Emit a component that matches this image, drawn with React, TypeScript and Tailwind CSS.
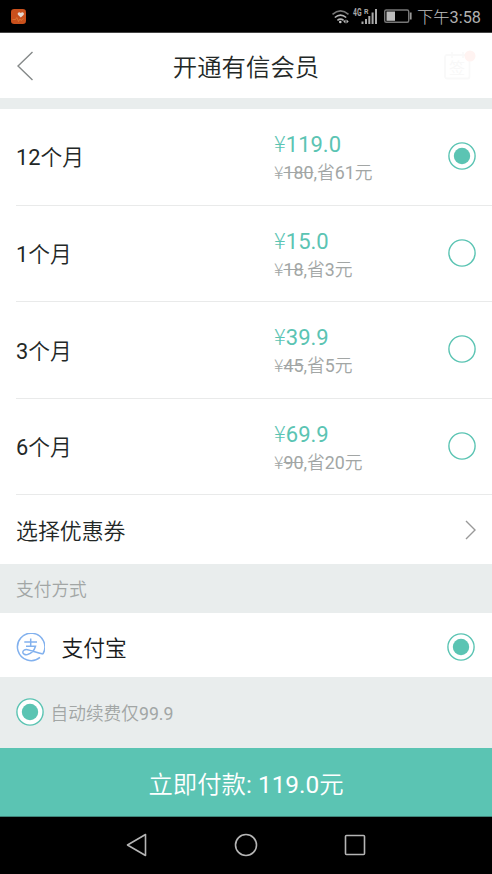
import React, { useState } from 'react'

const plans = [
    { months: 12, price: '119.0', original: '180', save: '61' },
    { months: 1, price: '15.0', original: '18', save: '3' },
    { months: 3, price: '39.9', original: '45', save: '5' },
    { months: 6, price: '69.9', original: '90', save: '20' },
]

const Radio: React.FC<{ checked?: boolean }> = ({ checked }) => (
    <svg className="block shrink-0" width="28" height="28" viewBox="0 0 28 28">
        <circle cx="14" cy="14" r="13.1" fill="#fff" stroke="#5bc4b3" strokeWidth="1.4" />
        {checked && <circle cx="14" cy="14" r="8.2" fill="#5bc4b3" />}
    </svg>
)

const StatusBar: React.FC = () => (
    <div className="flex h-[33px] shrink-0 items-center border-b border-[#444] bg-black pl-[11px] pr-[11px]">
        <svg width="15" height="15" viewBox="0 0 15 15">
            <rect width="15" height="15" rx="3.2" fill="#c9501c" />
            <path d="M9.8 8.6 7.1 6C5.6 4.3 8.1 2 9.8 4c1.7-2 4.2.3 2.7 2z" fill="#e3d8d1" />
            <path d="M1.5 10.5h3l1.3-2 1.7 4 1.5-2.5 1 1.5 2.5-2" fill="none" stroke="#e0893f" strokeWidth=".6" />
        </svg>
        <svg className="ml-auto" width="80" height="22" viewBox="332 5 80 22">
            <g fill="none" strokeWidth="1.6">
                <path d="M332.5 14.3q8-7 16 0" stroke="#777" />
                <path d="M334.8 17.5q5.7-4.8 11.4 0" stroke="#b5b5b5" />
                <path d="M337.4 20.3q3.1-2.5 6.2 0" stroke="#b5b5b5" />
            </g>
            <circle cx="340.3" cy="22" r="1.3" fill="#ccc" />
            <path d="m345.5 19.6-2.2 2 2.2 2zM346.5 19.6l2.2 2-2.2 2z" fill="#bbb" />
            <text x="353" y="16.2" fontSize="10" fontWeight="700" textLength="8.5" lengthAdjust="spacingAndGlyphs" fill="#aaa">4G</text>
            <text x="364" y="13.5" fontSize="7" fontWeight="700" fill="#aaa">R</text>
            <path d="M361.5 21.5h2V24h-2zM365 19h2v5h-2zM368.3 16h2v8h-2zM371.6 12.5h2V24h-2zM375 9h2v15h-2z" fill="#aaa" />
            <rect x="384.7" y="10" width="24" height="12.3" rx="1.5" fill="none" stroke="#777" strokeWidth="1.4" />
            <path d="M386.5 11.5h8.5v9.3h-8.5z" fill="#bdbdbd" />
            <path d="M410.7 12.5v7" stroke="#999" strokeWidth="1.8" />
        </svg>
        <span className="ml-[5px] pt-[4px] text-[16.3px] font-light leading-none text-[#c0c0c0]">
            下午<span className="font-normal text-[#b0b0b0]">3:58</span>
        </span>
    </div>
)

const App: React.FC = () => {
    const [selected, setSelected] = useState(0)

    return (
        <div className="flex h-[874px] w-[492px] flex-col overflow-hidden bg-white font-['Roboto','Noto_Sans_CJK_SC',sans-serif] text-[#232827]">
            <StatusBar />

            <header className="flex h-[65px] shrink-0 items-center justify-between pl-[17px] pr-4">
                <svg width="32" height="30" viewBox="0 0 32 30" fill="none" stroke="#858989" strokeWidth="1.4">
                    <path d="M15.5 1 1 15l14.5 14" />
                </svg>
                <h1 className="-ml-px pt-[5px] text-[24.4px] font-[350] leading-none">开通有信会员</h1>
                <svg width="32" height="32" viewBox="0 0 32 32" fill="none">
                    <rect x="1" y="5" width="24.5" height="23.5" rx="2" stroke="#f9f9f9" strokeWidth="1.8" />
                    <path d="M8 2v6M19 2v6" stroke="#f9f9f9" strokeWidth="1.5" />
                    <text x="5" y="24" fontSize="16" fill="#f8f8f8">签</text>
                    <circle cx="26" cy="6" r="5.5" fill="#fff3f1" />
                </svg>
            </header>

            <div className="h-[11px] shrink-0 bg-[#e9eded]" />

            <ul className="shrink-0 pl-4">
                {plans.map((plan, i) => (
                    <li
                        key={plan.months}
                        className="flex h-[96.6px] items-center border-b border-[#e9eaea] pb-px pr-4"
                        onClick={() => setSelected(i)}
                    >
                        <span className="w-[258px] pt-[4px] text-[21.8px] leading-none">
                            {plan.months}<span className="font-[350]">个月</span>
                        </span>
                        <div className="flex-1 pt-[6px]">
                            <p className="text-[22px] leading-[28px] text-[#5bc4b3]">
                                <span className="font-['Noto_Sans_CJK_SC',sans-serif] font-light leading-none">¥</span>
                                {plan.price}
                            </p>
                            <p className="text-[17.8px] leading-[28px] text-[#a2a6a5]">
                                <span className="font-['Noto_Sans_CJK_SC',sans-serif] font-light leading-none">¥</span>
                                <span className="line-through">{plan.original}</span>,
                                <span className="font-[350]">省</span>{plan.save}<span className="font-[350]">元</span>
                            </p>
                        </div>
                        <Radio checked={selected === i} />
                    </li>
                ))}
            </ul>

            <div className="flex h-[68.6px] shrink-0 items-center justify-between pl-4 pr-4">
                <span className="pt-[4px] text-[21.9px] font-[350] leading-none">选择优惠券</span>
                <svg width="11" height="20" viewBox="0 0 11 20" fill="none" stroke="#999" strokeWidth="1.4">
                    <path d="m1 1 9 9-9 9" />
                </svg>
            </div>

            <div className="flex h-[49.5px] shrink-0 items-center bg-[#e9eded] pl-4 pt-[5px] text-[17.7px] font-[350] leading-none text-[#a2a6a5]">
                支付方式
            </div>

            <div className="flex h-[63.5px] shrink-0 items-center pl-4 pr-[17.5px] pt-1">
                <svg width="29" height="29" viewBox="0 0 29 29" fill="none" stroke="#82b1ee" strokeWidth="1.5">
                    <path d="M26.9 21A13.7 13.7 0 1 0 24 24.4" />
                    <path d="M8.3 9h12.7M14.7 5.5v7.8M10 13.3h9.5c-1 3.500-4 7.200-8 8.200-2.500.5-4.700-.5-4.700-2.300 0-2 2-2.900 4.700-2.500 4.500.7 9 3.300 15.400 4.300" />
                </svg>
                <span className="ml-[16.5px] flex-1 pt-[4px] text-[21.8px] font-[350] leading-none text-[#191b1c]">支付宝</span>
                <Radio checked />
            </div>

            <div className="flex h-[71px] shrink-0 items-center bg-[#e9eded] pl-4">
                <Radio checked />
                <span className="ml-[6.5px] pt-[4px] text-[17.7px] leading-none text-[#a2a6a5]">
                    <span className="font-[350]">自动续费仅</span>99.9
                </span>
            </div>

            <button className="h-[69px] shrink-0 border-b border-[#3f8479] bg-[#5bc4b3] pt-[6px] text-[24.4px] leading-none text-white">
                <span className="font-[350]">立即付款</span>: {plans[selected].price}<span className="font-[350]">元</span>
            </button>

            <nav className="flex flex-1 items-center justify-between bg-black pb-px pl-[126px] pr-[126px]">
                <svg width="22" height="24" viewBox="0 0 22 24" fill="none" stroke="#b5b5b5" strokeWidth="1.6" strokeLinejoin="round">
                    <path d="M19.5 1.5v21L1.5 12z" />
                </svg>
                <svg width="24" height="24" viewBox="0 0 24 24" fill="none" stroke="#b5b5b5" strokeWidth="1.6">
                    <circle cx="12" cy="12" r="10.5" />
                </svg>
                <svg width="22" height="22" viewBox="0 0 22 22" fill="none" stroke="#b5b5b5" strokeWidth="1.6">
                    <rect x="1.5" y="1.5" width="19" height="19" rx="1" />
                </svg>
            </nav>
        </div>
    )
}

export default App
